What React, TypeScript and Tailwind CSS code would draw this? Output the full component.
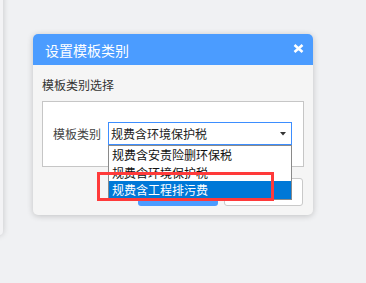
const OPTIONS = ['规费含安责险删环保税', '规费含环境保护税', '规费含工程排污费'];

export default function App() {
  const selected = 2;

  return (
    <div
      className="relative w-[366px] h-[283px] overflow-hidden bg-[#f0f1f3] text-[#333]"
      style={{ fontFamily: '"Noto Sans CJK SC", "Noto Sans", sans-serif' }}
    >
      {/* side panel peeking in from the left */}
      <div className="absolute left-[-30px] top-[-10px] w-[33px] h-[245px] rounded-[4px] bg-[#f3f3f5] shadow-[0_0_6px_rgba(0,0,0,0.18)]" />

      {/* dialog */}
      <div className="absolute left-[33px] top-[34px] w-[280px] rounded-[5px] bg-[#f5f5f5] shadow-[0_1px_6px_rgba(0,0,0,0.2)]">
        <div className="flex h-[31px] items-center justify-between rounded-t-[5px] bg-[#4b9cff] pl-[12px] pr-[9px]">
          <span className="text-[14px] leading-none text-white">设置模板类别</span>
          <svg width="11" height="9" viewBox="0 0 11 9" className="mt-[-2px]">
            <path d="M1.5 1 L9.5 8 M9.5 1 L1.5 8" stroke="#fff" strokeWidth="2.6" strokeLinecap="butt" />
          </svg>
        </div>

        <div className="px-[9px] pt-[11px] pb-[9px]">
          <div className="h-[18px] text-[12px] leading-[18px]">模板类别选择</div>

          <div className="mt-[7px] h-[66px] border border-[#c6c6c6] bg-white pt-[20px] pl-[10px]">
            <div className="flex items-center">
              <span className="w-[55px] text-[12px] leading-[23px] text-[#444]">模板类别</span>
              <div className="relative">
                <div className="flex h-[23px] w-[184px] items-center justify-between border border-[#3d8eff] pl-[2px] pr-[5px] text-[12px] text-[#222]">
                  <span>规费含环境保护税</span>
                  <svg width="6" height="4" viewBox="0 0 6 4">
                    <path d="M0 0 L6 0 L3 3.5 Z" fill="#333" />
                  </svg>
                </div>

                {/* opened option list */}
                <div className="absolute left-0 top-[23px] z-10 w-[184px] border border-[#8a8a8a] bg-white">
                  {OPTIONS.map((opt, i) => (
                    <div
                      key={opt}
                      className={
                        i === selected
                          ? 'h-[17.5px] bg-[#0078d7] pl-[3px] text-[12px] leading-[17.5px] text-white'
                          : 'h-[17.5px] pl-[3px] text-[12px] leading-[17.5px] text-[#111]'
                      }
                    >
                      {opt}
                    </div>
                  ))}
                </div>
              </div>
            </div>
          </div>

          {/* action buttons, covered by the open list */}
          <div className="mt-[11px] flex h-[28px] gap-[6px] pl-[96px]">
            <button className="w-[80px] rounded-[3px] bg-[#4b9cff]" />
            <button className="w-[79px] rounded-[3px] border border-[#c9c9c9] bg-white" />
          </div>
        </div>
      </div>

      {/* red annotation box */}
      <div className="absolute left-[97px] top-[172px] z-20 h-[29px] w-[177px] border-[3px] border-[#ff3a3a]" />
    </div>
  );
}
